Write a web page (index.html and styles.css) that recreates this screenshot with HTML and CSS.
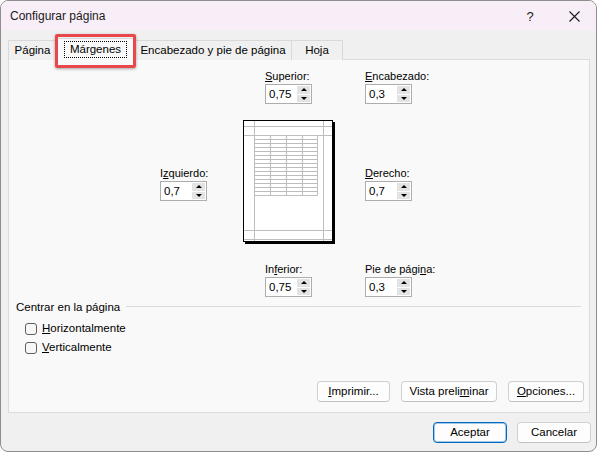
FILE: index.html
```html
<!DOCTYPE html>
<html lang="es">
<head>
<meta charset="utf-8">
<title>Configurar página</title>
<link rel="stylesheet" href="styles.css">
</head>
<body>
<div class="window">
  <div class="titlebar">
    <span class="title">Configurar página</span>
    <span class="tb-btn help">?</span>
    <span class="tb-btn close"><svg width="11" height="11" viewBox="0 0 11 11"><path d="M0.5 0.5L10.5 10.5M10.5 0.5L0.5 10.5" stroke="#1b1b1b" stroke-width="1.1" fill="none"/></svg></span>
  </div>
  <div class="body">
    <div class="tabs">
      <div class="tab t1">Página</div>
      <div class="tab sel t2"><span class="focus">Márgenes</span></div>
      <div class="tab t3">Encabezado y pie de página</div>
      <div class="tab t4">Hoja</div>
      <div class="highlight"></div>
    </div>
    <div class="panel">
      <div class="margins">
        <div class="field sup">
          <label><u>S</u>uperior:</label>
          <div class="spin"><span class="val">0,75</span><span class="btns"><span><i class="up"></i></span><span><i class="down"></i></span></span></div>
        </div>
        <div class="field enc">
          <label><u>E</u>ncabezado:</label>
          <div class="spin"><span class="val">0,3</span><span class="btns"><span><i class="up"></i></span><span><i class="down"></i></span></span></div>
        </div>
        <div class="field izq">
          <label>I<u>z</u>quierdo:</label>
          <div class="spin"><span class="val">0,7</span><span class="btns"><span><i class="up"></i></span><span><i class="down"></i></span></span></div>
        </div>
        <svg class="preview" width="92" height="124" viewBox="0 0 92 124">
          <rect x="2" y="2" width="90" height="122" fill="#000"/>
          <rect x="0.5" y="0.5" width="89" height="121" fill="#fff" stroke="#000"/>
          <g stroke="#bdbdbd" stroke-width="1" fill="none">
            <path d="M11.5 1V121M80.5 1V121M1 6.5H89M1 15.5H89M1 110.5H89M1 119.5H89"/>
            <path d="M11.5 19.5H74.5M11.5 23.5H74.5M11.5 27.5H74.5M11.5 31.5H74.5M11.5 35.5H74.5M11.5 39.5H74.5M11.5 43.5H74.5M11.5 47.5H74.5M11.5 51.5H74.5M11.5 55.5H74.5M11.5 59.5H74.5M11.5 63.5H74.5M11.5 67.5H74.5M11.5 71.5H74.5M11.5 75.5H74.5"/>
            <path d="M27.5 15.5V75.5M43.5 15.5V75.5M59.5 15.5V75.5M74.5 15.5V75.5"/>
          </g>
        </svg>
        <div class="field der">
          <label><u>D</u>erecho:</label>
          <div class="spin"><span class="val">0,7</span><span class="btns"><span><i class="up"></i></span><span><i class="down"></i></span></span></div>
        </div>
        <div class="field inf">
          <label>In<u>f</u>erior:</label>
          <div class="spin"><span class="val">0,75</span><span class="btns"><span><i class="up"></i></span><span><i class="down"></i></span></span></div>
        </div>
        <div class="field pie">
          <label>Pie de pági<u>n</u>a:</label>
          <div class="spin"><span class="val">0,3</span><span class="btns"><span><i class="up"></i></span><span><i class="down"></i></span></span></div>
        </div>
      </div>
      <div class="center">
        <div class="group-head"><span>Centrar en la página</span><span class="rule"></span></div>
        <div class="check first"><span class="box"></span><span><u>H</u>orizontalmente</span></div>
        <div class="check"><span class="box"></span><span><u>V</u>erticalmente</span></div>
      </div>
      <div class="panel-buttons">
        <button class="btn w-imp"><u>I</u>mprimir...</button>
        <button class="btn w-vista">Vista preli<u>m</u>inar</button>
        <button class="btn w-opc"><u>O</u>pciones...</button>
      </div>
    </div>
    <div class="dialog-buttons">
      <button class="btn default w-ok">Aceptar</button>
      <button class="btn w-cancel">Cancelar</button>
    </div>
  </div>
</div>
</body>
</html>
```

FILE: styles.css
```css
html, body {
  margin: 0;
  padding: 0;
  background: #ffffff;
}
body {
  font-family: "Liberation Sans", Arial, sans-serif;
  font-size: 11.5px;
  color: #000;
}
.window {
  width: 597px;
  height: 452px;
  box-sizing: border-box;
  border: 1px solid #8e8e8e;
  border-radius: 8px;
  background: #f0f0f0;
  overflow: hidden;
  display: flex;
  flex-direction: column;
}
.titlebar {
  height: 29px;
  background: #f8eef7;
  display: flex;
  align-items: center;
  flex: none;
}
.title {
  padding-left: 9px;
  font-size: 12px;
  line-height: 14px;
  color: #1a1a1a;
  flex: 1;
}
.tb-btn {
  width: 44px;
  height: 29px;
  display: flex;
  align-items: center;
  justify-content: center;
  color: #1b1b1b;
}
.help {
  font-size: 13px;
  padding-top: 1px;
  box-sizing: border-box;
}
.close svg { display: block; margin-top: 1px; }
.body {
  padding: 10px 0 0 7px;
  display: flex;
  flex-direction: column;
}
.tabs {
  position: relative;
  height: 19px;
  display: flex;
  align-items: flex-end;
  z-index: 2;
}
.tab {
  box-sizing: border-box;
  height: 20px;
  margin-bottom: -1px;
  border: 1px solid #d9d9d9;
  border-bottom: none;
  background: #f0f0f0;
  text-align: center;
  line-height: 18px;
  white-space: nowrap;
}
.t1 { width: 49px; }
.t2 {
  width: 81px;
  height: 22px;
  margin: 0 -2px -1px -2px;
  background: #f9f9f9;
  padding-top: 2px;
  line-height: 15px;
  position: relative;
  z-index: 3;
}
.t3 { width: 158px; }
.t4 { width: 52px; margin-left: -1px; }
.focus {
  display: inline-block;
  border: 1px dotted #000;
  padding: 0 5px;
  line-height: 15px;
}
.highlight {
  position: absolute;
  left: 47px;
  top: -6px;
  width: 81px;
  height: 34px;
  box-sizing: border-box;
  border: 3px solid #e8474c;
  border-radius: 2px;
  box-shadow: 0 1px 3px rgba(0,0,0,0.35);
  z-index: 4;
}
.panel {
  position: relative;
  z-index: 1;
  width: 582px;
  height: 354px;
  box-sizing: border-box;
  border: 1px solid #dcdcdc;
  background: #f9f9f9;
  padding: 9px 5px 10px 7px;
  display: flex;
  flex-direction: column;
}
.margins {
  margin-left: 144px;
  display: grid;
  grid-template-columns: 83px 122px 80px;
  align-items: start;
}
.field label {
  display: block;
  line-height: 15px;
  font-size: 11px;
  white-space: nowrap;
}
.sup { grid-column: 2; grid-row: 1; padding-left: 22px; }
.enc { grid-column: 3; grid-row: 1; }
.preview { grid-column: 2; grid-row: 2; margin-top: 16px; display: block; }
.izq { grid-column: 1; grid-row: 2; margin-top: 62px; }
.der { grid-column: 3; grid-row: 2; margin-top: 62px; }
.inf { grid-column: 2; grid-row: 3; padding-left: 22px; margin-top: 18px; }
.pie { grid-column: 3; grid-row: 3; margin-top: 18px; }
.spin {
  width: 47px;
  height: 20px;
  box-sizing: border-box;
  border: 1px solid #adadad;
  background: #fff;
  display: flex;
}
.spin .val {
  flex: 1;
  padding-left: 3px;
  line-height: 18px;
  font-size: 11.5px;
}
.spin .btns {
  width: 13px;
  margin: 1px 1px 1px 0;
  display: flex;
  flex-direction: column;
  gap: 1px;
}
.spin .btns span {
  flex: 1;
  background: #e3e3e3;
  display: flex;
  align-items: center;
  justify-content: center;
}
.up {
  width: 0;
  height: 0;
  border-left: 3px solid transparent;
  border-right: 3px solid transparent;
  border-bottom: 3px solid #000;
}
.down {
  width: 0;
  height: 0;
  border-left: 3px solid transparent;
  border-right: 3px solid transparent;
  border-top: 3px solid #000;
}
.center {
  margin-top: 3px;
}
.group-head {
  display: flex;
  align-items: flex-start;
  line-height: 15px;
}
.group-head .rule {
  flex: 1;
  height: 1px;
  background: #dcdcdc;
  margin: 6px 3px 0 6px;
}
.check {
  display: flex;
  align-items: flex-start;
  height: 19px;
  line-height: 15px;
  padding-left: 9px;
}
.check.first { margin-top: 6px; }
.check .box {
  width: 12px;
  height: 12px;
  box-sizing: border-box;
  border: 1px solid #5f5f5f;
  border-radius: 3px;
  background: #f7f7f7;
  margin: 2px 5px 0 0;
}
.panel-buttons {
  margin-top: auto;
  display: flex;
  justify-content: flex-end;
  gap: 11px;
}
.btn {
  box-sizing: border-box;
  height: 21px;
  padding: 0;
  border: 1px solid #d0d0d0;
  border-bottom-color: #c2c2c2;
  border-radius: 4px;
  background: #fdfdfd;
  font-family: "Liberation Sans", Arial, sans-serif;
  font-size: 11.5px;
  color: #000;
  line-height: 19px;
  text-align: center;
}
.w-imp { width: 73px; }
.w-vista { width: 96px; }
.w-opc { width: 76px; }
.dialog-buttons {
  margin-top: 9px;
  padding-right: 5px;
  display: flex;
  justify-content: flex-end;
  gap: 10px;
}
.w-ok { width: 74px; }
.w-cancel { width: 74px; }
.default {
  border-color: #0067c0;
  box-shadow: inset 0 0 0 1px rgba(0,103,192,0.35);
}
```
